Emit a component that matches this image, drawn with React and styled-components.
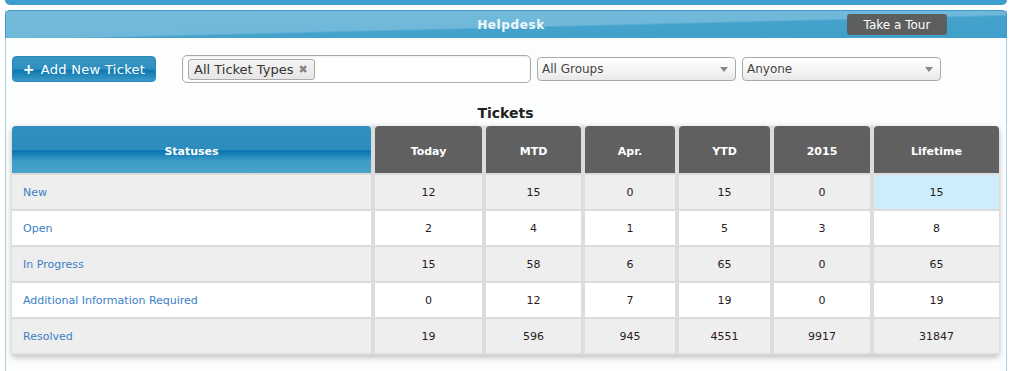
import React from "react";
import styled, { createGlobalStyle } from "styled-components";

const GlobalStyle = createGlobalStyle`
  body {
    margin: 0;
    background: #ffffff;
    font-family: "DejaVu Sans", Verdana, sans-serif;
  }
`;

const columns = ["Today", "MTD", "Apr.", "YTD", "2015", "Lifetime"];

const rows = [
  { name: "New", values: [12, 15, 0, 15, 0, 15], highlight: 5 },
  { name: "Open", values: [2, 4, 1, 5, 3, 8] },
  { name: "In Progress", values: [15, 58, 6, 65, 0, 65] },
  { name: "Additional Information Required", values: [0, 12, 7, 19, 0, 19] },
  { name: "Resolved", values: [19, 596, 945, 4551, 9917, 31847] },
];

function App() {
  return (
    <>
      <GlobalStyle />
      <Page>
        <TopBar />
        <Panel>
          <PanelHeader>
            <PanelTitle>Helpdesk</PanelTitle>
            <TourButton>Take a Tour</TourButton>
          </PanelHeader>
          <PanelBody>
            <Toolbar>
              <AddButton>
                <Plus>+</Plus> Add New Ticket
              </AddButton>
              <MultiSelect>
                <Tag>
                  All Ticket Types <TagClose>✖</TagClose>
                </Tag>
              </MultiSelect>
              <Select>
                All Groups
                <Caret />
              </Select>
              <Select>
                Anyone
                <Caret />
              </Select>
            </Toolbar>
            <TableTitle>Tickets</TableTitle>
            <Table>
              <StatusHead>Statuses</StatusHead>
              {columns.map((c) => (
                <HeadCell key={c}>{c}</HeadCell>
              ))}
              {rows.map((r, i) => (
                <React.Fragment key={r.name}>
                  <NameCell $alt={i % 2 === 0}>{r.name}</NameCell>
                  {r.values.map((v, j) => (
                    <ValueCell
                      key={j}
                      $alt={i % 2 === 0}
                      $highlight={r.highlight === j}
                    >
                      {v}
                    </ValueCell>
                  ))}
                </React.Fragment>
              ))}
            </Table>
          </PanelBody>
        </Panel>
      </Page>
    </>
  );
}

export default App;

const Page = styled.div`
  width: 1015px;
  height: 371px;
  overflow: hidden;
`;

const TopBar = styled.div`
  margin: 0 8px 0 5px;
  height: 5px;
  background: #3e9ecf;
  border-radius: 0 0 5px 5px;
`;

const Panel = styled.div`
  margin: 5px 8px 0 5px;
  border-left: 1px solid #a9cfe4;
  border-right: 1px solid #a9cfe4;
  background: #fcfefe;
  height: 400px;
`;

const PanelHeader = styled.div`
  position: relative;
  height: 27px;
  margin: 0 -1px;
  border: 1px solid #3c98cf;
  border-bottom: none;
  border-radius: 5px 5px 0 0;
  background: linear-gradient(178.6deg, #75bcdb 0%, #6fb8d9 54%, #44a2cc 58%, #40a0cb 100%);
  display: flex;
  align-items: center;
  justify-content: center;
`;

const PanelTitle = styled.div`
  color: #eef8fc;
  font-weight: bold;
  font-size: 12px;
  letter-spacing: 0.6px;
  margin-left: 10px;
`;

const TourButton = styled.div`
  position: absolute;
  right: 59px;
  top: 3px;
  width: 100px;
  height: 21px;
  background: #5d5e5e;
  border-radius: 3px;
  color: #ffffff;
  font-size: 12px;
  display: flex;
  align-items: center;
  justify-content: center;
`;

const PanelBody = styled.div`
  padding: 17px 0 0 6px;
`;

const Toolbar = styled.div`
  display: flex;
  align-items: center;
  height: 28px;
`;

const AddButton = styled.div`
  width: 142px;
  height: 24px;
  border: 1px solid #2a86b8;
  border-radius: 4px;
  background: linear-gradient(#3896c3 0%, #2f8fbe 50%, #0c77b1 55%, #3d9bc7 100%);
  color: #ffffff;
  font-size: 13px;
  letter-spacing: 0.3px;
  display: flex;
  align-items: center;
  justify-content: center;
  gap: 4px;
`;

const Plus = styled.span`
  font-weight: bold;
  font-size: 14px;
  margin-right: 2px;
`;

const MultiSelect = styled.div`
  margin-left: 26px;
  width: 342px;
  height: 26px;
  border: 1px solid #aaaaaa;
  border-radius: 5px;
  background: #ffffff;
  box-shadow: inset 0 1px 2px rgba(0, 0, 0, 0.08);
  display: flex;
  align-items: center;
  padding-left: 5px;
`;

const Tag = styled.div`
  height: 19px;
  padding: 0 6px 0 5px;
  border: 1px solid #aaaaaa;
  border-radius: 3px;
  background: linear-gradient(#f4f4f4, #e6e6e6);
  color: #333333;
  font-size: 13px;
  display: flex;
  align-items: center;
  gap: 5px;
`;

const TagClose = styled.span`
  color: #858585;
  font-size: 11px;
`;

const Select = styled.div`
  position: relative;
  margin-left: 6px;
  width: 193px;
  height: 22px;
  padding-left: 4px;
  border: 1px solid #aaaaaa;
  border-radius: 4px;
  background: linear-gradient(#ffffff 0%, #f4f4f4 60%, #e8e8e8 100%);
  color: #444444;
  font-size: 12px;
  display: flex;
  align-items: center;
`;

const Caret = styled.span`
  position: absolute;
  right: 7px;
  top: 9px;
  width: 0;
  height: 0;
  border-left: 4px solid transparent;
  border-right: 4px solid transparent;
  border-top: 5px solid #888888;
`;

const TableTitle = styled.div`
  margin-top: 22px;
  width: 987px;
  text-align: center;
  font-weight: bold;
  font-size: 14px;
  color: #222222;
  height: 17px;
  line-height: 17px;
`;

const Table = styled.div`
  margin-top: 4px;
  width: 987px;
  display: grid;
  grid-template-columns: 359px 107px 95px 90px 91px 96px 125px;
  grid-template-rows: 47px repeat(5, 34px);
  column-gap: 4px;
  row-gap: 2px;
  background: #dcdcdc;
  border-radius: 4px 4px 0 0;
  box-shadow: 0 2px 6px rgba(0, 0, 0, 0.28);
  padding-bottom: 2px;
`;

const StatusHead = styled.div`
  background: linear-gradient(#2f90bf 0%, #2d8ebd 50%, #0874b0 53%, #3f9dc7 75%, #48a2ca 100%);
  border-radius: 4px 4px 0 0;
  color: #ffffff;
  font-weight: bold;
  font-size: 11px;
  display: flex;
  align-items: center;
  justify-content: center;
  padding-top: 3px;
`;

const HeadCell = styled.div`
  background: #5f605f;
  border-radius: 4px 4px 0 0;
  color: #ffffff;
  font-weight: bold;
  font-size: 11px;
  display: flex;
  align-items: center;
  justify-content: center;
  padding-top: 3px;
`;

const NameCell = styled.div`
  background: ${(p) => (p.$alt ? "#eeeeee" : "#ffffff")};
  color: #3b80c6;
  font-size: 11px;
  display: flex;
  align-items: center;
  padding-left: 11px;
`;

const ValueCell = styled.div`
  background: ${(p) =>
    p.$highlight ? "#cdedfc" : p.$alt ? "#eeeeee" : "#ffffff"};
  color: #2a1a22;
  font-size: 11px;
  display: flex;
  align-items: center;
  justify-content: center;
`;
